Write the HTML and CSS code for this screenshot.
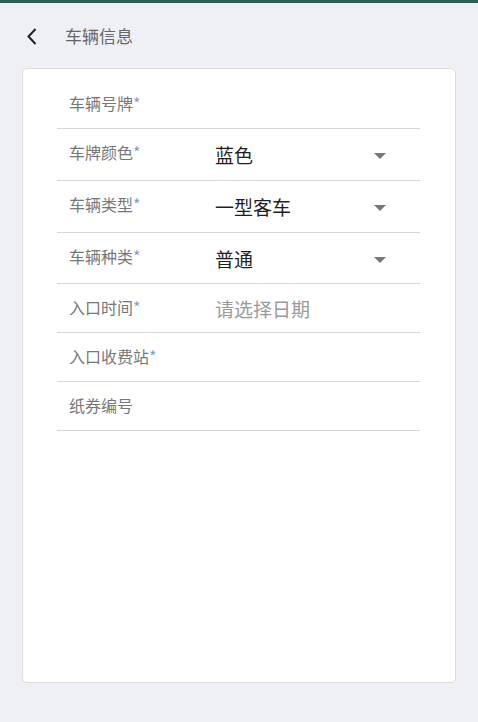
FILE: index.html
```html
<!DOCTYPE html>
<html>
<head>
<meta charset="utf-8">
<title>车辆信息</title>
<link rel="stylesheet" href="styles.css">
</head>
<body>

<div class="topbar"></div>

<header class="header">
	<span class="back">
		<svg width="10" height="17" viewBox="0 0 10 17"><path d="M8.5 1 L1.5 8.5 L8.5 16" fill="none" stroke="#222" stroke-width="2"/></svg>
	</span>
	<h1 class="title">车辆信息</h1>
</header>

<div class="card">
	<div class="form">

		<div class="row">
			<span class="label">车辆号牌<i>*</i></span>
		</div>

		<div class="row select">
			<span class="label">车牌颜色<i>*</i></span>
			<span class="value">蓝色</span>
			<span class="caret"></span>
		</div>

		<div class="row select">
			<span class="label">车辆类型<i>*</i></span>
			<span class="value">一型客车</span>
			<span class="caret"></span>
		</div>

		<div class="row select last">
			<span class="label">车辆种类<i>*</i></span>
			<span class="value">普通</span>
			<span class="caret"></span>
		</div>

		<div class="row">
			<span class="label">入口时间<i>*</i></span>
			<span class="value placeholder">请选择日期</span>
		</div>

		<div class="row">
			<span class="label">入口收费站<i>*</i></span>
		</div>

		<div class="row">
			<span class="label">纸券编号</span>
		</div>

	</div>
</div>

</body>
</html>
```

FILE: styles.css
```css
html, body {
	margin: 0;
	padding: 0;
}

body {
	background-color: #eff0f5;
	font-family: "Noto Sans CJK SC", "Noto Sans", sans-serif;
	height: 722px;
}

.topbar {
	height: 3px;
	background-color: #2e5e54;
}

.header {
	display: flex;
	align-items: center;
	height: 65px;
	padding-left: 27px;
}

.back {
	display: flex;
	width: 10px;
	height: 17px;
	margin-top: 1px;
}

.title {
	margin: 0 0 0 28px;
	font-size: 17px;
	font-weight: normal;
	color: #666;
	line-height: 24px;
}

.card {
	margin: 0 22px;
	height: 615px;
	box-sizing: border-box;
	background-color: #fff;
	border: 1px solid #dcdcdf;
	border-radius: 5px;
}

.form {
	padding: 11px 35px 0 34px;
}

.row {
	display: flex;
	align-items: flex-start;
	height: 49px;
	box-sizing: border-box;
	padding-top: 13px;
	border-bottom: 1px solid #d8d8d8;
}

.row.select {
	height: 52px;
}

.row.select.last {
	height: 51px;
}

.label {
	flex: 0 0 158px;
	box-sizing: border-box;
	padding-left: 12px;
	font-size: 16px;
	line-height: 20px;
	color: #777;
}

.label i {
	font-style: normal;
	color: #7d9fd4;
}

.value {
	flex: 1;
	font-size: 19px;
	line-height: 26px;
	color: #1f1f1f;
}

.value.placeholder {
	color: #9a9a9a;
	line-height: 24px;
}

.caret {
	width: 0;
	height: 0;
	margin: 11px 34px 0 0;
	border-left: 6px solid transparent;
	border-right: 6px solid transparent;
	border-top: 6px solid #777;
}
```
